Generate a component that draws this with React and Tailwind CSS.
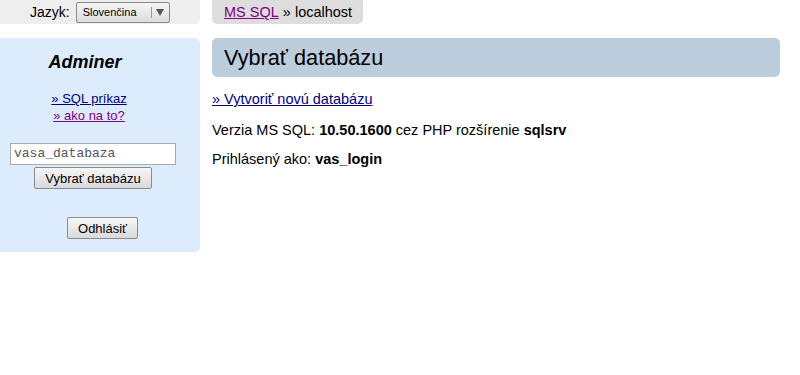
export default function App() {
  return (
    <div className="w-[800px] h-[375px] bg-white font-['Liberation_Sans',Arial,sans-serif] text-[14.5px] text-black">
      {/* top row */}
      <div className="flex">
        <div className="w-[200px] h-[24px] bg-[#eeeeee] rounded-br-[5px] flex items-center pl-[30px]">
          <span className="text-[14px] leading-none">Jazyk:</span>
          <div className="ml-[6px] w-[94px] h-[21px] border border-[#8a8a8a] rounded-[2px] bg-gradient-to-b from-[#f6f6f6] to-[#dcdcdc] flex items-center">
            <span className="pl-[6px] text-[11px] leading-none flex-1">Slovenčina</span>
            <span className="w-px h-[11px] bg-[#9a9a9a]"></span>
            <span className="w-[17px] flex justify-center">
              <svg width="8" height="7" viewBox="0 0 8 7"><path d="M0 0H8L4 7Z" fill="#555" /></svg>
            </span>
          </div>
        </div>
        <div className="ml-[12px] w-[151px] h-[24px] bg-[#dddddd] rounded-b-[5px] flex items-center pl-[12px] text-[14.5px] leading-none">
          <a href="#" className="text-[#800080] underline">MS SQL</a>
          <span>&nbsp;» localhost</span>
        </div>
      </div>

      {/* second row */}
      <div className="flex mt-[14px]">
        <div className="w-[200px] h-[214px] bg-[#ddecfd] rounded-r-[5px] flex flex-col">
          <div className="mt-[14px] w-[170px] text-center font-bold italic text-[18px] leading-[21px]">Adminer</div>
          <div className="mt-[17px] w-[178px] flex flex-col items-center text-[13px] leading-[17px]">
            <a href="#" className="text-[#000080] underline">» SQL príkaz</a>
            <a href="#" className="text-[#800080] underline">» ako na to?</a>
          </div>
          <div className="mt-[19px] ml-[10px] w-[166px] h-[22px] bg-white border border-[#a9a9a9] flex items-center pl-[3px] font-['Liberation_Mono',monospace] text-[13px] text-[#555]">
            vasa_databaza
          </div>
          <div className="mt-[2px] ml-[34px] w-[118px] h-[22px] border border-[#8a8a8a] rounded-[2px] bg-gradient-to-b from-[#f6f6f6] to-[#dadada] flex items-center justify-center text-[13px] leading-none">
            Vybrať databázu
          </div>
          <div className="mt-[28px] ml-[67px] w-[71px] h-[22px] border border-[#8a8a8a] rounded-[2px] bg-gradient-to-b from-[#f6f6f6] to-[#dadada] flex items-center justify-center text-[13px] leading-none">
            Odhlásiť
          </div>
        </div>

        <div className="ml-[12px] w-[568px]">
          <div className="h-[39px] bg-[#bccddd] rounded-[5px] flex items-center pl-[12px] text-[21.7px] leading-none">
            Vybrať databázu
          </div>
          <div className="mt-[14px] leading-[16px]">
            <a href="#" className="text-[#000080] underline">» Vytvoriť novú databázu</a>
          </div>
          <div className="mt-[14px] leading-[16px] pt-[1px]">
            Verzia MS SQL: <b>10.50.1600</b> cez PHP rozšírenie <b>sqlsrv</b>
          </div>
          <div className="mt-[13px] leading-[16px]">
            Prihlásený ako: <b>vas_login</b>
          </div>
        </div>
      </div>
    </div>
  );
}
